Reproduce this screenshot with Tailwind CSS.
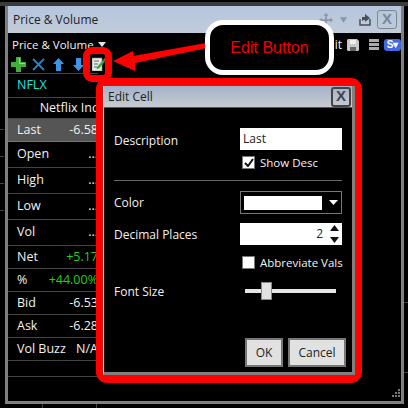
<!DOCTYPE html>
<html lang="en">
<head>
  <meta charset="UTF-8">
  <title>Price &amp; Volume</title>
  <script src="https://cdn.jsdelivr.net/npm/@tailwindcss/browser@4"></script>
</head>
<body class="w-[408px] h-[408px] overflow-hidden bg-black font-['Open_Sans',sans-serif] text-[12px] text-[#f2f2f2]">
  <div class="relative w-[408px] h-[408px] overflow-hidden bg-black">

    <!-- top strip -->
    <div class="h-[6px] bg-[#3a3a3a] border-t-2 border-black"></div>

    <!-- main window -->
    <div class="ml-[5px] w-[399px] h-[398px] border-x-[3px] border-b-[3px] border-[#808080] bg-black flex flex-col">
      <!-- title bar -->
      <div class="h-[27px] shrink-0 flex items-center pl-[5px] pr-[4px] bg-gradient-to-b from-[#b4c5de] to-[#c2ccd9] text-[#222] text-[12px]">
        <span>Price &amp; Volume</span>
        <div class="ml-auto flex items-center">
          <svg width="14" height="14" viewBox="0 0 16 16" class="mr-[6px]" fill="#8a95a5"><path d="M8 0l3 3H9v4h4V5l3 3-3 3V9H9v4h2l-3 3-3-3h2V9H3v2L0 8l3-3v2h4V3H5z"/></svg>
          <svg width="9" height="6" viewBox="0 0 10 6" class="mr-[11px]" fill="#8a95a5"><path d="M1 0h8L5 6z"/></svg>
          <svg width="12" height="13" viewBox="0 0 12 13" class="mr-[6px]" fill="none" stroke="#4a4f57" stroke-width="1.5"><path d="M1 6v6h10V6"/><path d="M3 8V4h3V1l5 4-5 4V7H5z" fill="#4a4f57" stroke="none"/></svg>
          <div class="w-[20px] h-[19px] border border-[#7d8793] rounded-[3px] flex items-center justify-center font-['Liberation_Sans'] font-bold text-[15px] text-[#7d8793]">X</div>
        </div>
      </div>

      <!-- toolbar -->
      <div class="h-[40px] shrink-0 relative">
        <div class="flex items-center h-[22px] pl-[4px] pt-[1px]">
          <span class="text-[11.5px]">Price &amp; Volume</span>
          <svg width="8" height="5" viewBox="0 0 8 5" class="ml-[4px]" fill="#e8e8e8"><path d="M0 0h8L4 5z"/></svg>
          <span class="ml-auto text-[12px]">Edit</span>
          <svg width="12" height="12" viewBox="0 0 12 12" class="ml-[5px]"><path d="M1 0h9l2 2v9l-1 1H1l-1-1V1z" fill="#c8c8c8"/><path d="M3 1h6v4H3z" fill="#eee"/><path d="M3 8h6v4H3z" fill="#666"/></svg>
          <div class="ml-[10px] w-[10px] flex flex-col gap-[1.500px]"><div class="h-[2.500px] bg-[#aaa]"></div><div class="h-[2.500px] bg-[#aaa]"></div><div class="h-[2.500px] bg-[#aaa]"></div></div>
          <div class="ml-[5px] w-[17px] h-[12px] rounded-[3px] bg-[#4169e1] flex items-center justify-center font-['Liberation_Sans'] font-bold text-[10px] text-white leading-none">S▾</div>
        </div>
        <div class="flex items-center h-[18px]">
          <div class="w-[20px] flex justify-center"><svg width="15" height="15" viewBox="0 0 15 15"><path d="M5 0h5v5h5v5h-5v5H5v-5H0V5h5z" fill="#3fae3a"/><path d="M6 1h3v5h5v1H8V1z" fill="#8fe07f"/></svg></div>
          <div class="w-[20px] flex justify-center"><svg width="13" height="13" viewBox="0 0 13 13" stroke="#1f86d6" stroke-width="1.8"><path d="M1 1l11 11M12 1L1 12"/></svg></div>
          <div class="w-[20px] flex justify-center"><svg width="11" height="13" viewBox="0 0 11 13"><path d="M5.500 0l5.500 6H8v7H3V6H0z" fill="#3d95e6"/></svg></div>
          <div class="w-[20px] flex justify-center"><svg width="11" height="13" viewBox="0 0 11 13"><path d="M5.500 13L0 7h3V0h5v7h3z" fill="#3d95e6"/></svg></div>
          <div class="w-[20px] flex justify-center"><svg width="13" height="14" viewBox="0 0 13 14"><path d="M0 1h10v13H0z" fill="#e8e8e8" stroke="#888" stroke-width=".6"/><path d="M2 4h5M2 7h4M2 10h3" stroke="#666"/><path d="M5 10l6-7 2 1.500L7 11.500l-2.500.5z" fill="#39a935"/><path d="M11 2.500l2 1.500 0-3z" fill="#e04a2a"/></svg></div>
        </div>
      </div>

      <!-- quote table -->
      <div class="w-[90px] text-[12.500px]">
        <div class="h-[24px] pl-[9px] flex items-center border-t border-[#444] text-[#22e0e0]">NFLX</div>
        <div class="h-[22px] flex items-center justify-end border-y border-[#444]">Netflix Inc</div>
        <div class="h-[23px] flex items-center justify-between pl-[9px] bg-[#555] border-b border-[#777]"><span>Last</span><span>-6.58</span></div>
        <div class="h-[26px] flex items-center justify-between pl-[9px] border-b border-[#444]"><span>Open</span><span>...</span></div>
        <div class="h-[26px] flex items-center justify-between pl-[9px] border-b border-[#444]"><span>High</span><span>...</span></div>
        <div class="h-[26px] flex items-center justify-between pl-[9px] border-b border-[#444]"><span>Low</span><span>...</span></div>
        <div class="h-[26px] flex items-center justify-between pl-[9px] border-b border-[#444]"><span>Vol</span><span>...</span></div>
        <div class="h-[23px] flex items-center justify-between pl-[9px] border-b border-[#444]"><span>Net</span><span class="text-[#1fd01f]">+5.17</span></div>
        <div class="h-[23px] flex items-center justify-between pl-[9px] border-b border-[#444]"><span>%</span><span class="text-[#1fd01f]">+44.00%</span></div>
        <div class="h-[23px] flex items-center justify-between pl-[9px] border-b border-[#444]"><span>Bid</span><span>-6.53</span></div>
        <div class="h-[23px] flex items-center justify-between pl-[9px] border-b border-[#444]"><span>Ask</span><span>-6.28</span></div>
        <div class="h-[23px] flex items-center justify-between pl-[9px] border-b border-[#444]"><span>Vol Buzz</span><span>N/A</span></div>
        <div class="h-[16px] border-b border-[#444]"></div>
      </div>
    </div>

    <!-- faint marks from the window behind -->
    <div class="absolute left-0 top-[129px] w-[4px] h-px bg-[#444]"></div>
    <div class="absolute left-0 top-[156px] w-[4px] h-px bg-[#444]"></div>
    <div class="absolute left-0 top-[183px] w-[4px] h-px bg-[#444]"></div>
    <div class="absolute left-0 top-[210px] w-[4px] h-px bg-[#444]"></div>
    <div class="absolute left-[42px] top-[404px] w-px h-[4px] bg-[#444]"></div>
    <div class="absolute left-[96px] top-[404px] w-px h-[4px] bg-[#444]"></div>
    <div class="absolute left-[404px] top-[302px] w-[4px] h-px bg-[#444]"></div>
    <div class="absolute left-[404px] top-[372px] w-[4px] h-px bg-[#444]"></div>

    <!-- resize grip -->
    <svg width="10" height="10" viewBox="0 0 10 10" fill="#777" class="absolute left-[391px] top-[389px]"><path d="M7 0h2v2H7zM4 3h2v2H4zM7 3h2v2H7zM1 6h2v2H1zM4 6h2v2H4zM7 6h2v2H7z"/></svg>

    <!-- red ring round the edit icon -->
    <div class="absolute left-[83px] top-[47px] w-[29px] h-[35px] border-[7px] border-[#ff0000] rounded-[9px]"></div>

    <!-- arrow -->
    <svg width="100" height="34" viewBox="0 0 100 34" class="absolute left-[110px] top-[40px]"><path d="M3 21L23 11v5L96 3l1 5-72 15v8z" fill="#ff0000"/></svg>

    <!-- callout -->
    <div class="absolute left-[205px] top-[20px] w-[129px] h-[55px] border-[5px] border-white rounded-[18px] bg-black flex items-center justify-center font-['Liberation_Sans'] text-[16px] text-[#f00000]">Edit Button</div>

    <!-- edit cell dialog -->
    <div class="absolute left-[96px] top-[78px] w-[266px] h-[305px] border-[7px] border-t-[8px] border-b-[8px] border-[#ff0000] rounded-[11px]">
      <div class="w-full h-full border-l border-white border-r-[3px] border-b-[3px] border-r-[#808080] border-b-[#808080] bg-black flex flex-col">
        <div class="h-[22px] shrink-0 flex items-center pl-[4px] pr-[1px] bg-gradient-to-b from-[#a3b1c8] to-[#c8ccd2] text-[#222] border-b border-[#555] text-[12px]">
          <span>Edit Cell</span>
          <div class="ml-auto w-[20px] h-[20px] border-2 border-[#444] rounded-[3px] flex items-center justify-center font-['Liberation_Sans'] font-bold text-[15px] text-[#444]">X</div>
        </div>
        <div class="grid grid-cols-[126px_102px] pl-[10px] pt-[20px] items-center">
          <span class="pt-[3px]">Description</span>
          <div class="h-[22px] bg-white text-[#222] pl-[3px] flex items-center">Last</div>
          <span></span>
          <div class="h-[13px] mt-[6px] ml-[2px] flex items-center gap-[5px] whitespace-nowrap">
            <div class="w-[13px] h-[13px] shrink-0 bg-white border border-[#777] flex items-center justify-center"><svg width="10" height="9" viewBox="0 0 10 9" fill="none" stroke="#111" stroke-width="2"><path d="M1 5l3 3 5-7"/></svg></div>
            <span class="text-[11.5px]">Show Desc</span>
          </div>
          <div class="col-span-2 h-px bg-[#666] mt-[11px] mb-[10px]"></div>
          <span>Color</span>
          <div class="h-[23px] border border-[#777] flex items-center pl-[3px]">
            <div class="w-[78px] h-[14px] bg-white"></div>
            <svg width="9" height="5" viewBox="0 0 9 5" class="ml-[7px]" fill="#fff"><path d="M0 0h9L4.500 5z"/></svg>
          </div>
          <span class="mt-[10px]">Decimal Places</span>
          <div class="h-[22px] mt-[9px] bg-white text-[#222] flex items-center justify-end">
            <span class="mr-[3px]">2</span>
            <div class="w-[16px] h-full flex flex-col items-center justify-between py-[2px] bg-white">
              <svg width="9" height="6" viewBox="0 0 9 6" fill="#111"><path d="M4.500 0L9 6H0z"/></svg>
              <svg width="9" height="6" viewBox="0 0 9 6" fill="#111"><path d="M0 0h9L4.500 6z"/></svg>
            </div>
          </div>
          <span></span>
          <div class="h-[13px] mt-[11px] ml-[2px] flex items-center gap-[5px] whitespace-nowrap">
            <div class="w-[13px] h-[13px] shrink-0 bg-white border border-[#777]"></div>
            <span class="text-[11.5px]">Abbreviate Vals</span>
          </div>
          <span class="mt-[14px]">Font Size</span>
          <div class="relative mt-[12px] h-[18px] ml-[5px] w-[91px] flex items-center">
            <div class="w-full h-[4px] bg-[#e6e6e6]"></div>
            <div class="absolute left-[16px] top-0 w-[11px] h-[18px] bg-[#e1e1e1] border border-[#888]"></div>
          </div>
        </div>
        <div class="mt-auto mb-[5px] flex justify-end gap-[5px] pr-[6px] text-[#222]">
          <div class="w-[38px] h-[29px] bg-[#e1e1e1] border-2 border-[#777] flex items-center justify-center">OK</div>
          <div class="w-[58px] h-[29px] bg-[#e1e1e1] border-2 border-[#777] flex items-center justify-center">Cancel</div>
        </div>
      </div>
    </div>
  </div>
</body>
</html>
